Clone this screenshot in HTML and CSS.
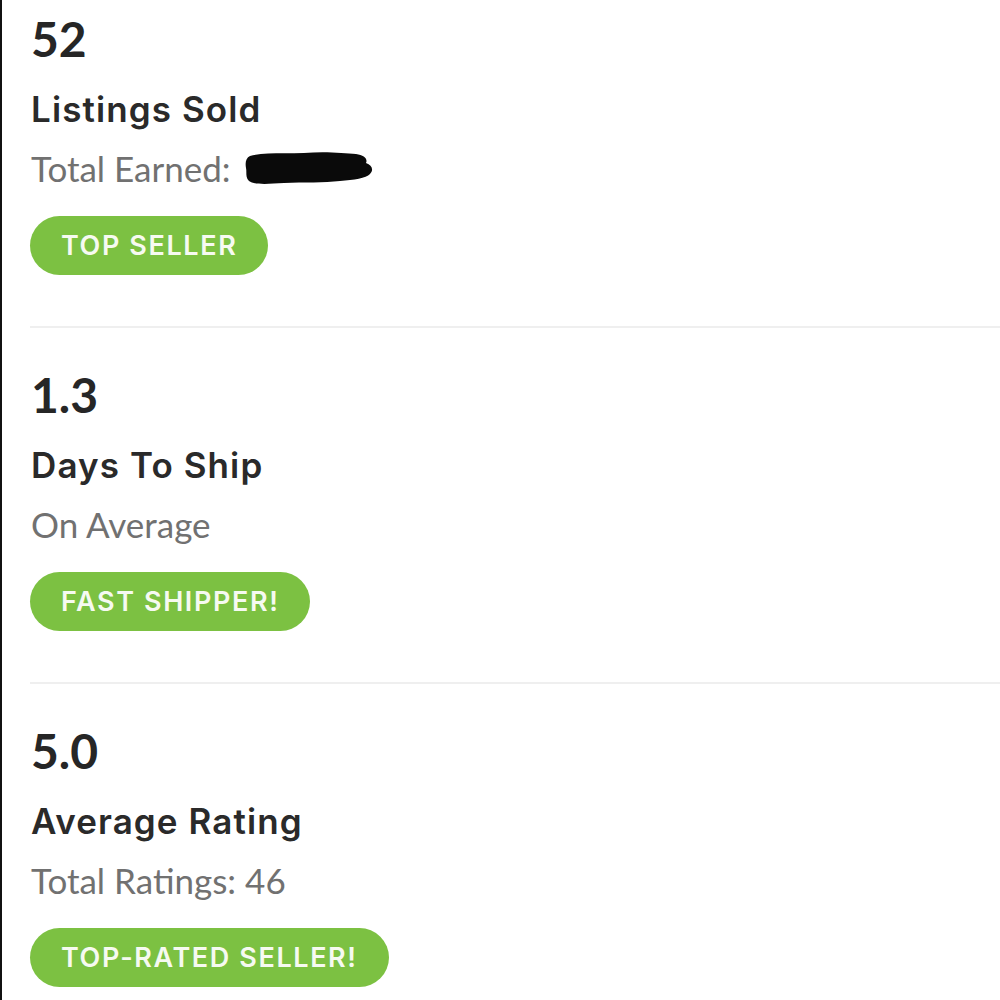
FILE: index.html
```html
<!DOCTYPE html>
<html>
<head>
<meta charset="utf-8">
<link rel="stylesheet" href="styles.css">
</head>
<body>
<div class="panel">
  <section class="stat first">
    <div class="num">52</div>
    <div class="title">Listings Sold</div>
    <div class="sub">Total Earned: <svg class="redact" width="130" height="36" viewBox="0 0 130 36"><path d="M6 6 C20 2 40 4 60 3 C80 1 100 3 112 4 C120 5 124 9 122 13 C128 15 130 20 126 24 C122 28 110 30 96 31 C80 33 60 32 40 33 C24 34 10 35 5 31 C1 27 3 22 2 18 C1 12 2 8 6 6 Z" fill="#0a0a0a"/></svg></div>
    <div class="badge">TOP SELLER</div>
  </section>
  <section class="stat">
    <div class="num">1.3</div>
    <div class="title">Days To Ship</div>
    <div class="sub">On Average</div>
    <div class="badge">FAST SHIPPER!</div>
  </section>
  <section class="stat last">
    <div class="num">5.0</div>
    <div class="title">Average Rating</div>
    <div class="sub">Total Ratings: 46</div>
    <div class="badge">TOP-RATED SELLER!</div>
  </section>
</div>
</body>
</html>
```
FILE: styles.css
```css
html, body {
  margin: 0;
  padding: 0;
  background: #ffffff;
}
body {
  font-family: Lato, "Open Sans", sans-serif;
}
.panel {
  border-left: 2px solid #111111;
  min-height: 1000px;
  box-sizing: border-box;
  padding-left: 28px;
  overflow: hidden;
}
.stat {
  display: flex;
  flex-direction: column;
  align-items: flex-start;
  padding: 43px 0 51px 0;
  border-bottom: 2px solid #efefef;
}
.stat.first {
  padding-top: 15px;
}
.stat.last {
  border-bottom: none;
}
.num {
  font-size: 48px;
  line-height: 48px;
  font-weight: 700;
  color: #262626;
  padding-left: 1px;
}
.title {
  margin-top: 29px;
  font-family: Inter, Lato, sans-serif;
  font-size: 35px;
  line-height: 35px;
  font-weight: 600;
  letter-spacing: 1.1px;
  color: #2a2a2a;
  padding-left: 1px;
}
.sub {
  margin-top: 24px;
  font-size: 35px;
  line-height: 35px;
  font-weight: 400;
  color: #717171;
  display: flex;
  align-items: center;
  padding-left: 1px;
  white-space: pre;
}
.redact {
  display: block;
  margin-left: 4px;
  margin-top: -2px;
}
.badge {
  margin-top: 30px;
  height: 59px;
  box-sizing: border-box;
  padding: 0 31px;
  border-radius: 30px;
  background: #7cc142;
  color: #f6faf1;
  font-family: Inter, Lato, sans-serif;
  font-size: 27px;
  font-weight: 600;
  letter-spacing: 1.6px;
  display: flex;
  align-items: center;
}
```
